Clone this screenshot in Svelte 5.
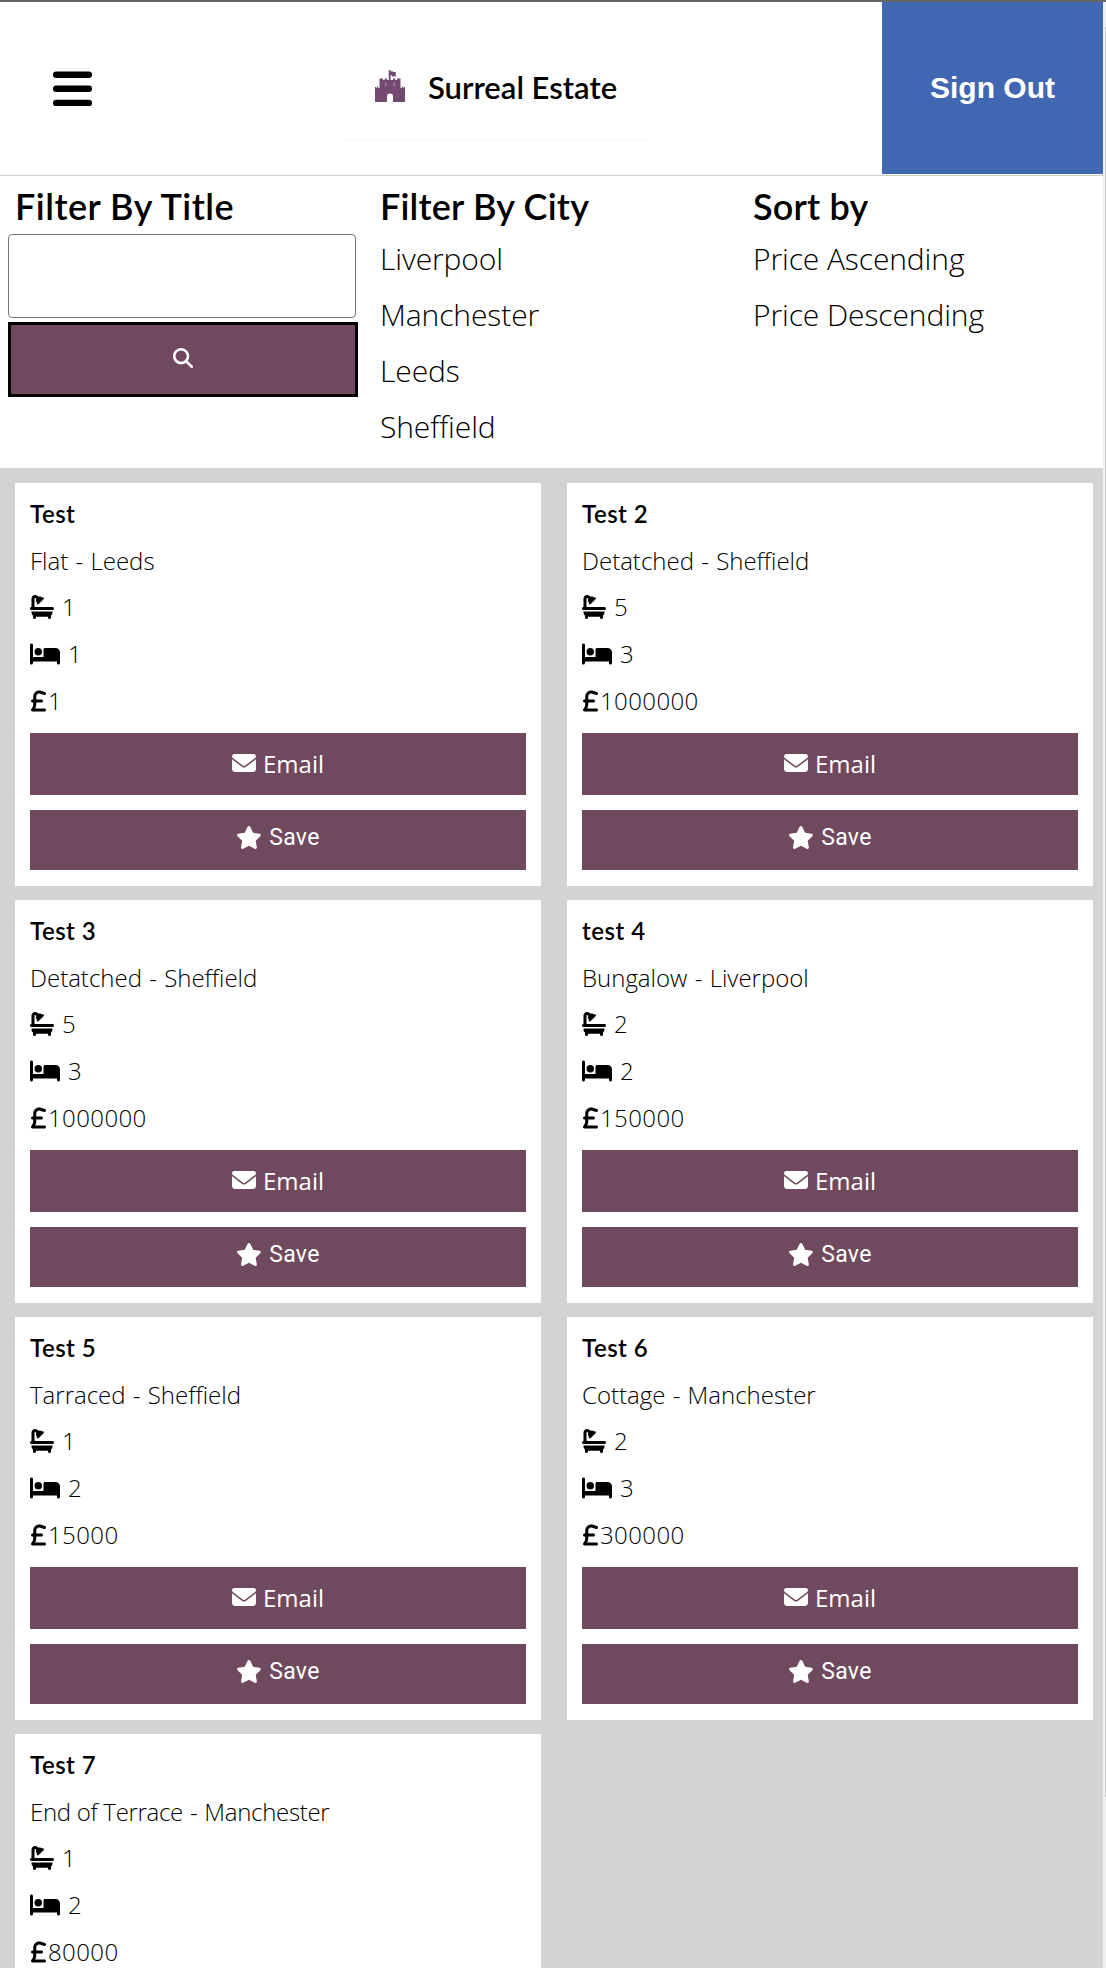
<script>
  const cities = ['Liverpool', 'Manchester', 'Leeds', 'Sheffield'];
  const sorts = ['Price Ascending', 'Price Descending'];

  const properties = [
    { title: 'Test', type: 'Flat', city: 'Leeds', baths: 1, beds: 1, price: 1 },
    { title: 'Test 2', type: 'Detatched', city: 'Sheffield', baths: 5, beds: 3, price: 1000000 },
    { title: 'Test 3', type: 'Detatched', city: 'Sheffield', baths: 5, beds: 3, price: 1000000 },
    { title: 'test 4', type: 'Bungalow', city: 'Liverpool', baths: 2, beds: 2, price: 150000 },
    { title: 'Test 5', type: 'Tarraced', city: 'Sheffield', baths: 1, beds: 2, price: 15000 },
    { title: 'Test 6', type: 'Cottage', city: 'Manchester', baths: 2, beds: 3, price: 300000 },
    { title: 'Test 7', type: 'End of Terrace', city: 'Manchester', baths: 1, beds: 2, price: 80000 }
  ];

  const icons = {
    bath: { w: 512, d: 'M96 77.3c0-7.3 5.9-13.3 13.3-13.3c3.5 0 6.9 1.4 9.4 3.9l14.9 14.9C130 91.8 128 101.7 128 112c0 19.9 7.2 38 19.2 52c-5.3 9.2-4 21.1 3.8 29c9.4 9.4 24.6 9.4 33.9 0L289 89c9.4-9.4 9.4-24.6 0-33.9c-7.9-7.9-19.8-9.1-29-3.8C246 39.2 227.9 32 208 32c-10.3 0-20.2 2-29.2 5.5L163.9 22.6C149.4 8.1 129.7 0 109.3 0C66.6 0 32 34.6 32 77.3V256c-17.7 0-32 14.3-32 32s14.3 32 32 32H480c17.7 0 32-14.3 32-32s-14.3-32-32-32H96V77.3zM32 352v16c0 28.4 12.4 54 32 71.6V480c0 17.7 14.3 32 32 32s32-14.3 32-32V464H384v16c0 17.7 14.3 32 32 32s32-14.3 32-32V439.6c19.6-17.6 32-43.1 32-71.6V352H32z' },
    bed: { w: 640, d: 'M32 32c17.7 0 32 14.3 32 32V320H288V160c0-17.7 14.3-32 32-32H544c53 0 96 43 96 96V448c0 17.7-14.3 32-32 32s-32-14.3-32-32V416H352 320 64v32c0 17.7-14.3 32-32 32s-32-14.3-32-32V64C0 46.3 14.3 32 32 32zm144 96a80 80 0 1 1 0 160 80 80 0 1 1 0-160z' },
    pound: { w: 320, d: 'M112 160.4c0-35.5 28.8-64.4 64.4-64.4c6.9 0 13.8 1.1 20.4 3.3l81.2 27.1c16.8 5.6 34.9-3.5 40.5-20.2s-3.5-34.9-20.2-40.5L217 38.6c-13.1-4.4-26.8-6.6-40.6-6.6C105.5 32 48 89.5 48 160.4V224H32c-17.7 0-32 14.3-32 32s14.3 32 32 32H48v44.5c0 17.4-4.7 34.5-13.7 49.4L4.6 431.5c-5.9 9.9-6.1 22.2-.4 32.2S20.5 480 32 480H288c17.7 0 32-14.3 32-32s-14.3-32-32-32H88.5l.7-1.1C104.1 390 112 361.5 112 332.5V288H224c17.7 0 32-14.3 32-32s-14.3-32-32-32H112V160.4z' },
    envelope: { w: 512, d: 'M48 64C21.5 64 0 85.5 0 112c0 15.1 7.1 29.3 19.2 38.4L236.8 313.6c11.4 8.5 27 8.5 38.4 0L492.8 150.4c12.1-9.1 19.2-23.3 19.2-38.4c0-26.5-21.5-48-48-48H48zM0 176V384c0 35.3 28.7 64 64 64H448c35.3 0 64-28.7 64-64V176L294.4 339.2c-22.8 17.1-54 17.1-76.8 0L0 176z' },
    star: { w: 576, d: 'M316.9 18C311.6 7 300.4 0 288.1 0s-23.4 7-28.8 18L195 150.3 51.4 171.5c-12 1.8-22 10.2-25.7 21.7s-.7 24.2 7.9 32.7L137.8 329 113.2 474.7c-2 12 3 24.2 12.9 31.3s23 8 33.8 2.3l128.3-68.5 128.3 68.5c10.8 5.7 23.9 4.9 33.8-2.3s14.9-19.3 12.9-31.3L438.5 329 542.7 225.9c8.6-8.5 11.7-21.2 7.9-32.7s-13.7-19.9-25.7-21.7L381.2 150.3 316.9 18z' },
    search: { w: 512, d: 'M416 208c0 45.9-14.9 88.3-40 122.7L502.6 457.4c12.5 12.5 12.5 32.8 0 45.3s-32.8 12.5-45.3 0L330.7 376c-34.4 25.2-76.8 40-122.7 40C93.1 416 0 322.9 0 208S93.1 0 208 0S416 93.1 416 208zM208 352a144 144 0 1 0 0-288 144 144 0 1 0 0 288z' }
  };

  let query = $state('');
</script>

{#snippet icon(name)}
  <svg class="icon {name}" viewBox="0 0 {icons[name].w} 512" aria-hidden="true"><path d={icons[name].d} /></svg>
{/snippet}

<div class="page">
  <div class="content">
    <header>
      <button class="menu" aria-label="Menu">
        <svg viewBox="0 0 39 36" aria-hidden="true">
          <rect y="0.5" width="39" height="6.4" rx="3.2" />
          <rect y="14.6" width="39" height="6.4" rx="3.2" />
          <rect y="28.7" width="39" height="6.4" rx="3.2" />
        </svg>
      </button>
      <div class="brand">
        <svg class="castle" viewBox="0 0 30 33" aria-hidden="true">
          <path d="M13.700 0h1.600v1.200h2.200l.6.900h2.600v4.300h-3.200l-.6-.8h-1.400V10H18v-1.500h2.300V10h1.700V8.500h3.500v9.500h1.300v-1.500h1.200V18h.8v-1H30V32H18v-5.500a3 3 0 0 0-6 0V32H0V17h1.200v1h.8v-1.500h1.200V18h1.300V8.500H8V10h1.700V8.500H12V10h1.700z" />
          <path class="slit" d="M10 12.500h1.300v4H10zM18.700 12.500H20v4h-1.300z" />
        </svg>
        <span>Surreal Estate</span>
      </div>
      <button class="sign-out">Sign Out</button>
    </header>

    <section class="filters">
      <form class="search-form">
        <h2>Filter By Title</h2>
        <input type="text" bind:value={query} aria-label="Title" />
        <button type="button" aria-label="Search">{@render icon('search')}</button>
      </form>
      <div class="options">
        <h2>Filter By City</h2>
        <ul>{#each cities as city}<li>{city}</li>{/each}</ul>
      </div>
      <div class="options">
        <h2>Sort by</h2>
        <ul>{#each sorts as sort}<li>{sort}</li>{/each}</ul>
      </div>
    </section>

    <main>
      {#each properties as p}
        <article>
          <h3>{p.title}</h3>
          <p class="kind" class:long={p.type.includes(' ')}>{p.type} <span>-</span> {p.city}</p>
          <p class="count">{@render icon('bath')}{p.baths}</p>
          <p class="count">{@render icon('bed')}{p.beds}</p>
          <p class="price">{@render icon('pound')}{p.price}</p>
          <button class="email">{@render icon('envelope')}Email</button>
          <button class="save">{@render icon('star')}Save</button>
        </article>
      {/each}
    </main>
  </div>
  <div class="scrollbar"><div class="thumb"></div></div>
</div>

<style>
  :global(body) {
    background: #fff;
    overflow: hidden;
  }

  .page {
    display: grid;
    grid-template-columns: 1fr 3px;
    box-sizing: border-box;
    height: 1968px;
    border-top: 2px solid #666;
    overflow: hidden;
    color: #000;
    font-family: 'Open Sans', sans-serif;
    font-weight: 350;
  }

  .content {
    min-width: 0;
  }

  button {
    display: flex;
    align-items: center;
    justify-content: center;
    padding: 0;
    border: 0;
    color: #fff;
  }

  h2,
  h3,
  p,
  ul {
    margin: 0;
    padding: 0;
  }

  .icon {
    height: 24px;
    fill: currentColor;
    flex: none;
  }

  header {
    display: grid;
    grid-template-columns: 344px 1fr 221px;
    height: 172px;
    padding-bottom: 1px;
    border-bottom: 1px solid #ccc;
  }

  .menu {
    justify-content: flex-start;
    padding: 1px 0 0 53px;
    background: none;
  }

  .menu svg {
    width: 39px;
    height: 36px;
    fill: #000;
  }

  .brand {
    display: flex;
    align-items: center;
    align-self: start;
    gap: 23px;
    box-sizing: border-box;
    width: 304px;
    height: 139px;
    padding: 31px 0 0 31px;
    border-bottom: 1px solid #f8f8f8;
    font: 600 31px/44px Lato, sans-serif;
    white-space: nowrap;
  }

  .castle {
    width: 30px;
    height: 33px;
    fill: #734a70;
  }

  .slit {
    fill: #a78aa5;
  }

  .sign-out {
    background: #4267b2;
    font: bold 30px 'Liberation Sans', Arial, sans-serif;
  }

  .filters {
    display: grid;
    grid-template-columns: 380px 373px 1fr;
    height: 292px;
  }

  h2 {
    padding-top: 2px;
    font: 600 36px/56px Lato, sans-serif;
    white-space: nowrap;
  }

  .search-form h2 {
    padding-left: 15px;
    letter-spacing: 0.5px;
  }

  .search-form input {
    display: block;
    box-sizing: border-box;
    width: 348px;
    height: 84px;
    margin: 0 0 4px 8px;
    border: 1px solid #767676;
    border-radius: 4px;
    background: #fff;
  }

  .search-form button {
    box-sizing: border-box;
    width: 350px;
    height: 75px;
    margin-left: 8px;
    padding-bottom: 3px;
    border: 3px solid #000;
    background: #6f4a5e;
  }

  .icon.search {
    height: 20px;
  }

  .options h2 {
    letter-spacing: 0.2px;
  }

  .options ul {
    margin-top: -3px;
    list-style: none;
    font-size: 30px;
    line-height: 56px;
    letter-spacing: -0.1px;
  }

  main {
    display: grid;
    grid-template-columns: 526px 526px;
    grid-auto-rows: 403px;
    gap: 14px 26px;
    box-sizing: border-box;
    height: 1500px;
    padding: 15px 10px 0 15px;
    background: #d3d3d3;
  }

  article {
    padding: 7px 15px 16px;
    box-sizing: border-box;
    background: #fff;
    font-size: 24px;
    line-height: 47px;
  }

  h3 {
    font: 600 24px/47px Lato, sans-serif;
    letter-spacing: 0.5px;
  }

  p {
    height: 47px;
    white-space: nowrap;
  }

  .kind {
    height: 46px;
  }

  .kind span {
    padding: 0 1px;
  }

  .long {
    letter-spacing: -0.3px;
  }

  .count,
  .price {
    display: flex;
    align-items: center;
  }

  .count {
    gap: 8px;
  }

  .price {
    gap: 3px;
    letter-spacing: 0.4px;
  }

  .pound {
    margin-left: 1px;
    margin-right: -1px;
  }

  article button {
    width: 496px;
    background: #6f4a5e;
  }

  .email {
    height: 62px;
    margin: 9px 0 15px;
    padding-bottom: 2px;
    gap: 7px;
    font: 400 24px 'Open Sans', sans-serif;
  }

  .save {
    height: 60px;
    gap: 7px;
    padding-bottom: 5px;
    font: 23px Roboto, sans-serif;
    letter-spacing: 0.3px;
  }

  .star {
    height: 23px;
  }

  .scrollbar {
    padding-top: 25px;
    background: #f0f0f0;
  }

  .thumb {
    height: 1770px;
    margin-left: 2px;
    background: #c4c4c4;
  }
</style>
